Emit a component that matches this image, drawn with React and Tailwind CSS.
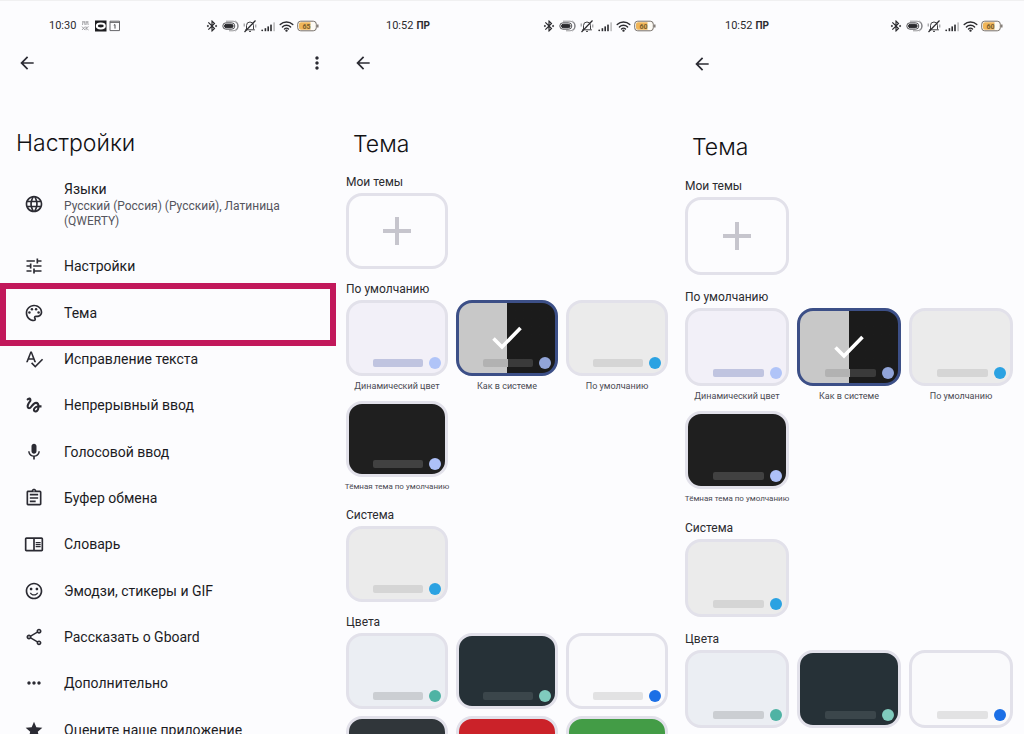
import clsx from 'clsx';
import {
  MdArrowBack,
  MdBluetoothConnected,
  MdGesture,
  MdLanguage,
  MdMic,
  MdMoreHoriz,
  MdMoreVert,
  MdOutlineAssignment,
  MdOutlineChromeReaderMode,
  MdOutlinePalette,
  MdOutlineShare,
  MdSentimentSatisfiedAlt,
  MdSpellcheck,
  MdStar,
  MdTune,
} from 'react-icons/md';

const menuItems = [
  { icon: MdTune, label: 'Настройки' },
  { icon: MdOutlinePalette, label: 'Тема', highlighted: true },
  { icon: MdSpellcheck, label: 'Исправление текста' },
  { icon: MdGesture, label: 'Непрерывный ввод' },
  { icon: MdMic, label: 'Голосовой ввод' },
  { icon: MdOutlineAssignment, label: 'Буфер обмена' },
  { icon: MdOutlineChromeReaderMode, label: 'Словарь' },
  { icon: MdSentimentSatisfiedAlt, label: 'Эмодзи, стикеры и GIF' },
  { icon: MdOutlineShare, label: 'Рассказать о Gboard' },
  { icon: MdMoreHoriz, label: 'Дополнительно' },
  { icon: MdStar, label: 'Оцените наше приложение' },
];

const sections = [
  { title: 'Мои темы', add: true, themes: [] },
  {
    title: 'По умолчанию',
    labelled: true,
    themes: [
      { name: 'Динамический цвет', bg: 'bg-[#f2f0f8]', bar: 'bg-[#c0c4e0]', dot: 'bg-[#b0c4f8]' },
      { name: 'Как в системе', selected: true, bg: 'bg-linear-to-r from-[#c8c8c8] from-50% to-[#1b1b1b] to-50%', bar: 'bg-linear-to-r from-[#b2b2b2] from-50% to-[#3a3a3a] to-50%', dot: 'bg-[#91a4d8]' },
      { name: 'По умолчанию', bg: 'bg-[#ebebeb]', bar: 'bg-[#d5d5d5]', dot: 'bg-[#2ba2e2]' },
      { name: 'Тёмная тема по умолчанию', small: true, bg: 'bg-[#1f1f1f]', bar: 'bg-[#414141]', dot: 'bg-[#adc0f8]' },
    ],
  },
  {
    title: 'Система',
    themes: [{ name: 'Системная', bg: 'bg-[#ebebeb]', bar: 'bg-[#d5d5d5]', dot: 'bg-[#2ba2e2]' }],
  },
  {
    title: 'Цвета',
    themes: [
      { name: 'Светлая', bg: 'bg-[#ebeef3]', bar: 'bg-[#cbced2]', dot: 'bg-[#4fb3a4]' },
      { name: 'Тёмно-синяя', bg: 'bg-[#263137]', bar: 'bg-[#3b464b]', dot: 'bg-[#80cbbd]' },
      { name: 'Белая', bg: 'bg-[#fafafc]', bar: 'bg-[#e2e2e3]', dot: 'bg-[#1b6fe6]' },
      { name: 'Графитовая', bg: 'bg-[#30363a]', bar: 'bg-[#4a5054]', dot: 'bg-[#80cbbd]' },
      { name: 'Красная', bg: 'bg-[#cb2229]', bar: 'bg-[#d9575c]', dot: 'bg-white' },
      { name: 'Зелёная', bg: 'bg-[#439c46]', bar: 'bg-[#6cb46f]', dot: 'bg-white' },
    ],
  },
];

const PillIcon = () => (
  <svg viewBox="0 0 17 12" className="h-3 w-[17px]" fill="none" stroke="currentColor">
    <path d="M4 1.2h7a4.8 4.8 0 0 1 0 9.6H7" strokeWidth="0.8" opacity="0.6" />
    <rect x="0.8" y="2.8" width="12" height="6.4" rx="3.2" strokeWidth="0.8" />
    <rect x="2.5" y="4.3" width="8.6" height="3.4" rx="1.7" fill="currentColor" />
    <path d="M13.5 1a6 6 0 0 1 0 10" strokeWidth="0.8" opacity="0.6" />
  </svg>
);

const MutedIcon = () => (
  <svg viewBox="0 0 14 14" className="h-3.5 w-4" fill="none" stroke="currentColor">
    <path d="M3.5 10V6.5a3.5 3.5 0 0 1 7 0V10l1 .8h-9zM6 12.4h2" strokeWidth="0.9" />
    <path d="M1.5 13 12.5 1.5" strokeWidth="1.2" />
    <path d="M1.2 4.5v3M12.8 5.5v3" strokeWidth="0.8" opacity="0.7" />
  </svg>
);

const SignalIcon = () => (
  <svg viewBox="0 0 15 12" className="h-3 w-[15px]" fill="currentColor">
    <circle cx="1.2" cy="10.3" r="0.9" />
    <rect x="3.6" y="8.2" width="1.6" height="3" />
    <rect x="6.4" y="6.4" width="1.6" height="4.8" />
    <rect x="9.2" y="4.6" width="1.6" height="6.6" />
    <rect x="12.4" y="2.4" width="1.4" height="8.8" opacity="0.35" />
  </svg>
);

const WifiIcon = () => (
  <svg viewBox="0 0 15 12" className="h-3 w-[15px]" fill="none" stroke="currentColor" strokeWidth="1.4" strokeLinecap="round">
    <path d="M1.2 4.6a9 9 0 0 1 12.6 0M3.4 6.9a5.8 5.8 0 0 1 8.2 0M5.5 9a3 3 0 0 1 4 0" />
    <circle cx="7.5" cy="10.6" r="0.5" fill="currentColor" />
  </svg>
);

const BatteryIcon = ({ level }) => (
  <svg viewBox="0 0 22 12" className="h-3 w-[22px]">
    <rect x="0.7" y="1.2" width="18.6" height="9.6" rx="3" fill="#fdfbf5" stroke="#77706a" />
    <path d="M4 2.2h9.5v7.6H4A2 2 0 0 1 2 8V4a2 2 0 0 1 2-1.8z" fill="#efb65a" />
    <path d="M20.8 4.5v3" stroke="#77706a" strokeWidth="1.4" />
    <text x="9.5" y="8.5" textAnchor="middle" fontSize="7" fontWeight="700" fill="#7a6030">{level}</text>
  </svg>
);

const NotificationIcons = () => (
  <svg viewBox="0 0 41 12" className="h-3 w-[41px]" fill="none">
    <g stroke="#9a9a9e" strokeWidth="0.9">
      <path d="M3 1.8h3M6.5 1.8h3M4 1.8 3.5 5M5.6 1.8 6 5M7.3 1.8 7 5M8.6 1.8 9.2 5M3 6.6 6 10M6 6.6 3 10M7 6.6v3.6M7 8.2 9.6 6.6M7.2 8.2 9.6 10" />
    </g>
    <rect x="16" y="0.5" width="11.5" height="11" fill="#1d1d20" />
    <ellipse cx="21.8" cy="6" rx="4" ry="2.4" stroke="#fff" strokeWidth="2" />
    <path d="M31 1.2h9.5v9.4H31z" stroke="#66666a" />
    <path d="M31 2.4h9.5" stroke="#66666a" />
    <path d="M34.8 5.2 36 4.6v4" stroke="#4a4a4e" />
  </svg>
);

const StatusBar = ({ time, level, notifications, className }) => (
  <div className={clsx('flex shrink-0 items-center justify-between text-[#2b2b2f]', className)}>
    <div className="flex items-center gap-[3px]">
      <span className="text-[11px] leading-4">{time}</span>
      {notifications ? (
        <NotificationIcons />
      ) : (
        <span className="text-[10px] leading-4 font-bold">ПР</span>
      )}
    </div>
    <div className="flex items-center gap-[3px]">
      <MdBluetoothConnected className="h-3.5 w-3.5" />
      <PillIcon />
      <MutedIcon />
      <SignalIcon />
      <WifiIcon />
      <BatteryIcon level={level} />
    </div>
  </div>
);

const IconButton = ({ icon: Icon, label }) => (
  <button type="button" aria-label={label} className="flex h-[26px] w-5 items-center justify-center text-[#2b2b33]">
    <Icon className="h-5 w-5 shrink-0" />
  </button>
);

const SettingsScreen = () => (
  <section className="flex min-h-0 min-w-0 flex-col overflow-hidden">
    <StatusBar time="10:30" level="65" notifications className="h-[49px] pr-[19px] pl-[49px]" />
    <div className="flex shrink-0 justify-between pr-[11px] pl-[17px]">
      <IconButton icon={MdArrowBack} label="Назад" />
      <IconButton icon={MdMoreVert} label="Ещё" />
    </div>
    <h1 className="mt-[51px] px-4 font-[Inter,sans-serif] text-[23px] leading-8 font-light text-[#111114]">Настройки</h1>

    <a href="#languages" className="mt-5 flex shrink-0 gap-5 pr-8 pb-3.5 pl-6">
      <MdLanguage className="mt-[15px] h-5 w-5 shrink-0 text-[#2b2b33]" />
      <span className="flex flex-col">
        <span className="text-sm leading-5 text-[#1b1b1f]">Языки</span>
        <span className="text-xs leading-[15px] text-[#55555d]">
          Русский (Россия) (Русский), Латиница (QWERTY)
        </span>
      </span>
    </a>

    <nav className="grid h-[510px] shrink-0 auto-rows-fr">
      {menuItems.map(({ icon: Icon, label, highlighted }) => (
        <a key={label} href="#settings" className="relative flex items-center gap-5 pl-6">
          <Icon className="h-5 w-5 shrink-0 text-[#2b2b33]" />
          <span className="text-sm text-[#1b1b1f]">{label}</span>
          {highlighted && (
            <span className="absolute -top-1.5 right-0.5 -bottom-2.5 left-0 border-6 border-[#c2185b]" />
          )}
        </a>
      ))}
    </nav>
  </section>
);

const ThemeTile = ({ theme, large, labelled }) => (
  <button type="button" aria-label={theme.name} className="flex min-w-0 flex-col items-center">
    <span
      className={clsx(
        'relative flex w-full items-end justify-end overflow-hidden rounded-2xl border-3',
        large ? 'h-[78px]' : 'h-[76px]',
        theme.selected ? 'border-[#3c4f87]' : 'border-[#e2e1ea]',
        theme.bg
      )}
    >
      <span className="flex w-full items-center justify-end gap-1.5 pr-1 pb-1">
        <span className={clsx('h-2 w-[54%] rounded-xs', theme.bar)} />
        <span className={clsx('h-3 w-3 rounded-full', theme.dot)} />
      </span>
      {theme.selected && (
        <svg viewBox="0 0 30 24" className="absolute inset-0 m-auto h-6 w-[30px]" fill="none" stroke="#fff" strokeWidth="3.6">
          <path d="M1.5 12.5 10 21 28.5 2" />
        </svg>
      )}
    </span>
    {labelled && (
      <span className={clsx('leading-5 whitespace-nowrap text-[#4a4a52]', theme.small ? 'text-[8px]' : 'text-[9px]')}>
        {theme.name}
      </span>
    )}
  </button>
);

const AddTile = ({ large }) => (
  <button
    type="button"
    aria-label="Добавить тему"
    className={clsx(
      'flex items-center justify-center rounded-2xl border-3 border-[#e2e1ea]',
      large ? 'h-[78px]' : 'h-[76px]'
    )}
  >
    <svg viewBox="0 0 28 28" className="h-7 w-7" stroke="#c6c5cd" strokeWidth="4">
      <path d="M14 0v28M0 14h28" />
    </svg>
  </button>
);

const ThemeScreen = ({ large }) => (
  <section className={clsx('flex min-h-0 min-w-0 flex-col overflow-hidden', large ? 'pr-[11px] pl-[9px]' : 'px-2')}>
    <StatusBar
      time="10:52"
      level="60"
      className={large ? 'h-[50px] pr-2.5 pl-10' : 'h-[49px] pr-3 pl-10'}
    />
    <div className="flex shrink-0 pl-[7px]">
      <IconButton icon={MdArrowBack} label="Назад" />
    </div>
    <h1
      className={clsx(
        'px-[7px] font-[Inter,sans-serif] text-[23px] leading-8 font-light text-[#111114]',
        large ? 'mt-[54px] mb-3' : 'mt-[52px] mb-[11px]'
      )}
    >
      Тема
    </h1>

    {sections.map((section) => (
      <div
        key={section.title}
        className={clsx(
          'shrink-0',
          section.labelled ? (large ? 'pb-2' : 'pb-[7px]') : large ? 'pb-[11px]' : 'pb-[9px]'
        )}
      >
        <h2 className="text-xs leading-[22px] text-[#2b2b2f]">{section.title}</h2>
        <div className={clsx('grid grid-cols-3 gap-x-2', section.labelled ? 'gap-y-[5px]' : 'gap-y-[7px]')}>
          {section.add && <AddTile large={large} />}
          {section.themes.map((theme) => (
            <ThemeTile key={theme.name} theme={theme} large={large} labelled={section.labelled} />
          ))}
        </div>
      </div>
    ))}
  </section>
);

export default function App() {
  return (
    <div className="h-screen bg-white pb-0.5 font-[Roboto,'Noto_Sans',sans-serif]">
      <main className="grid h-full grid-cols-[338fr_338fr_348fr] grid-rows-1 overflow-hidden border-t border-[#f0f0f1] bg-[#fcfcfe]">
        <SettingsScreen />
        <ThemeScreen />
        <ThemeScreen large />
      </main>
    </div>
  );
}
